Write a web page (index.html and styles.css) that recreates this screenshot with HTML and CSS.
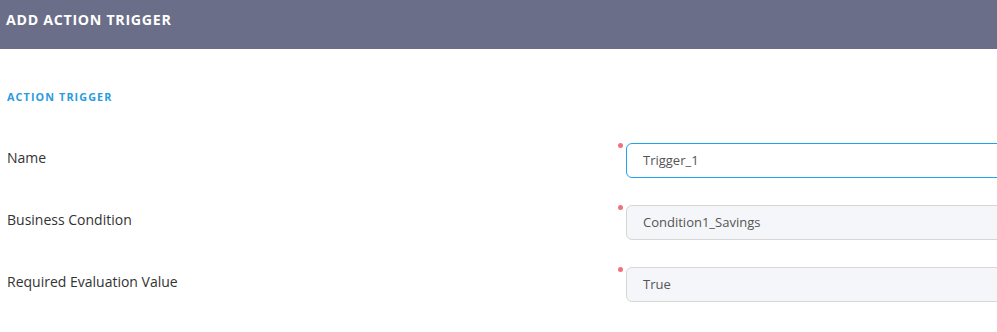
FILE: index.html
```html
<!DOCTYPE html>
<html lang="en">
<head>
  <meta charset="UTF-8" />
  <meta name="viewport" content="width=device-width, initial-scale=1.0"/>
  <title>Add Action Trigger</title>
  <link rel="stylesheet" href="styles.css">
</head>
<body>
  <!-- Modal header -->
  <div class="modal-header">
    <h2>ADD ACTION TRIGGER</h2>
  </div>

  <!-- Form body -->
  <div class="modal-body">
    <h3 class="section-title">ACTION TRIGGER</h3>

    <div class="form-row">
      <label class="form-label">Name</label>
      <div class="form-field">
        <span class="required-dot"></span>
        <div class="input input-focus">Trigger_1</div>
      </div>
    </div>

    <div class="form-row">
      <label class="form-label">Business Condition</label>
      <div class="form-field">
        <span class="required-dot"></span>
        <div class="input input-readonly">Condition1_Savings</div>
      </div>
    </div>

    <div class="form-row">
      <label class="form-label">Required Evaluation Value</label>
      <div class="form-field">
        <span class="required-dot"></span>
        <div class="input input-readonly">True</div>
      </div>
    </div>
  </div>
</body>
</html>
```

FILE: styles.css
```css
/* Reset & base styles */
* {
  margin: 0;
  padding: 0;
  box-sizing: border-box;
}
html, body {
  width: 100%;
  height: 100%;
  overflow: hidden;
  background: #fff;
  font-family: "Open Sans", Arial, sans-serif;
}

/* Header */
.modal-header {
  height: 49px;
  background: #6b6e88;
  padding: 9px 6px 0;
}
.modal-header h2 {
  color: #fff;
  font-size: 14.2px;
  font-weight: 700;
  letter-spacing: 0.7px;
  line-height: 22px;
}

/* Body */
.modal-body {
  padding: 38px 0 0 7px;
}
.section-title {
  color: #2b9be0;
  font-size: 10.8px;
  font-weight: 700;
  letter-spacing: 1.1px;
  line-height: 20px;
  margin-bottom: 36px;
}

/* Form rows */
.form-row {
  display: flex;
  align-items: center;
  margin-bottom: 27px;
}
.form-label {
  width: 611px;
  flex-shrink: 0;
  color: #333;
  font-size: 14px;
  padding-bottom: 7px;
}
.form-field {
  display: flex;
  align-items: flex-start;
  gap: 3px;
}
.required-dot {
  width: 5px;
  height: 5px;
  border-radius: 50%;
  background: #f0717e;
}
.input {
  width: 520px;
  height: 35px;
  border-radius: 6px;
  padding: 0 16px;
  line-height: 33px;
  font-size: 13px;
  color: #555;
}
.input-focus {
  border: 1px solid #1aa5ee;
  background: #fff;
}
.input-readonly {
  border: 1px solid #d6d6d6;
  background: #f4f6f9;
}
```
